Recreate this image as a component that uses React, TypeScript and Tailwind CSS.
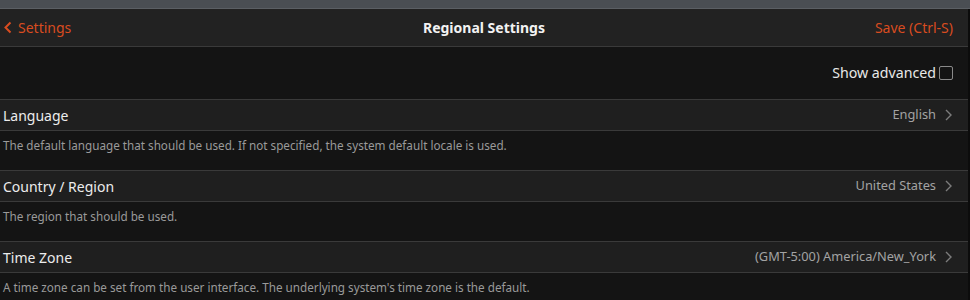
import React from "react";

const font = { fontFamily: '"Noto Sans", "Open Sans", sans-serif' };

function Chevron({ className }: { className?: string }) {
  return (
    <svg width="7" height="12" viewBox="0 0 7 12" className={className}>
      <path d="M1 1l5 5-5 5" fill="none" stroke="currentColor" strokeWidth="1.4" />
    </svg>
  );
}

const settings = [
  {
    label: "Language",
    value: "English",
    desc: "The default language that should be used. If not specified, the system default locale is used.",
  },
  { label: "Country / Region", value: "United States", desc: "The region that should be used." },
  {
    label: "Time Zone",
    value: "(GMT-5:00) America/New_York",
    desc: "A time zone can be set from the user interface. The underlying system's time zone is the default.",
  },
];

export default function App() {
  return (
    <div className="w-[970px] h-[300px] overflow-hidden bg-[#141414] flex flex-col" style={font}>
      {/* window strip */}
      <div className="h-[9px] bg-[#4a4e53] border-b border-[#5b5f64] shrink-0" />

      <div className="flex flex-col flex-1 border-r-2 border-[#0c0c0c]">
        {/* header */}
        <div className="h-[38px] bg-[#222222] border-b border-[#3a3a3a] flex items-center justify-between px-[4px] shrink-0">
          <div className="flex items-center gap-[6px] text-[#d94c20] text-[14px] w-[200px]">
            <svg width="8" height="13" viewBox="0 0 8 13">
              <path d="M6.5 1.5l-5 5 5 5" fill="none" stroke="currentColor" strokeWidth="2" />
            </svg>
            <span>Settings</span>
          </div>
          <div className="text-[#f2f2f2] text-[14px] font-bold">Regional Settings</div>
          <div className="text-[#d94c20] text-[14px] w-[200px] text-right pr-[11px]">Save (Ctrl-S)</div>
        </div>

        {/* show advanced */}
        <div className="h-[52px] flex items-center justify-end pr-[15px] shrink-0">
          <span className="text-[#e8e8e8] text-[14.2px] mr-[3px]">Show advanced</span>
          <span className="w-[14px] h-[14px] border border-[#8a8a8a] rounded-[2px]" />
        </div>

        {settings.map((s) => (
          <div key={s.label} className="flex flex-col shrink-0">
            <div className="h-[32px] bg-[#1f1f1f] border-y border-[#3a3a3a] flex items-center justify-between pl-[3px] pr-[16px]">
              <span className="text-[#ececec] text-[14px]">{s.label}</span>
              <span className="flex items-center gap-[9px] text-[#a3a3a3] text-[12.8px]">
                {s.value}
                <Chevron className="text-[#7c7c7c]" />
              </span>
            </div>
            <div className="h-[39px] pl-[3px] pt-[5px] text-[#9a9a9a] text-[11.7px] leading-[18px]">{s.desc}</div>
          </div>
        ))}
      </div>
    </div>
  );
}
